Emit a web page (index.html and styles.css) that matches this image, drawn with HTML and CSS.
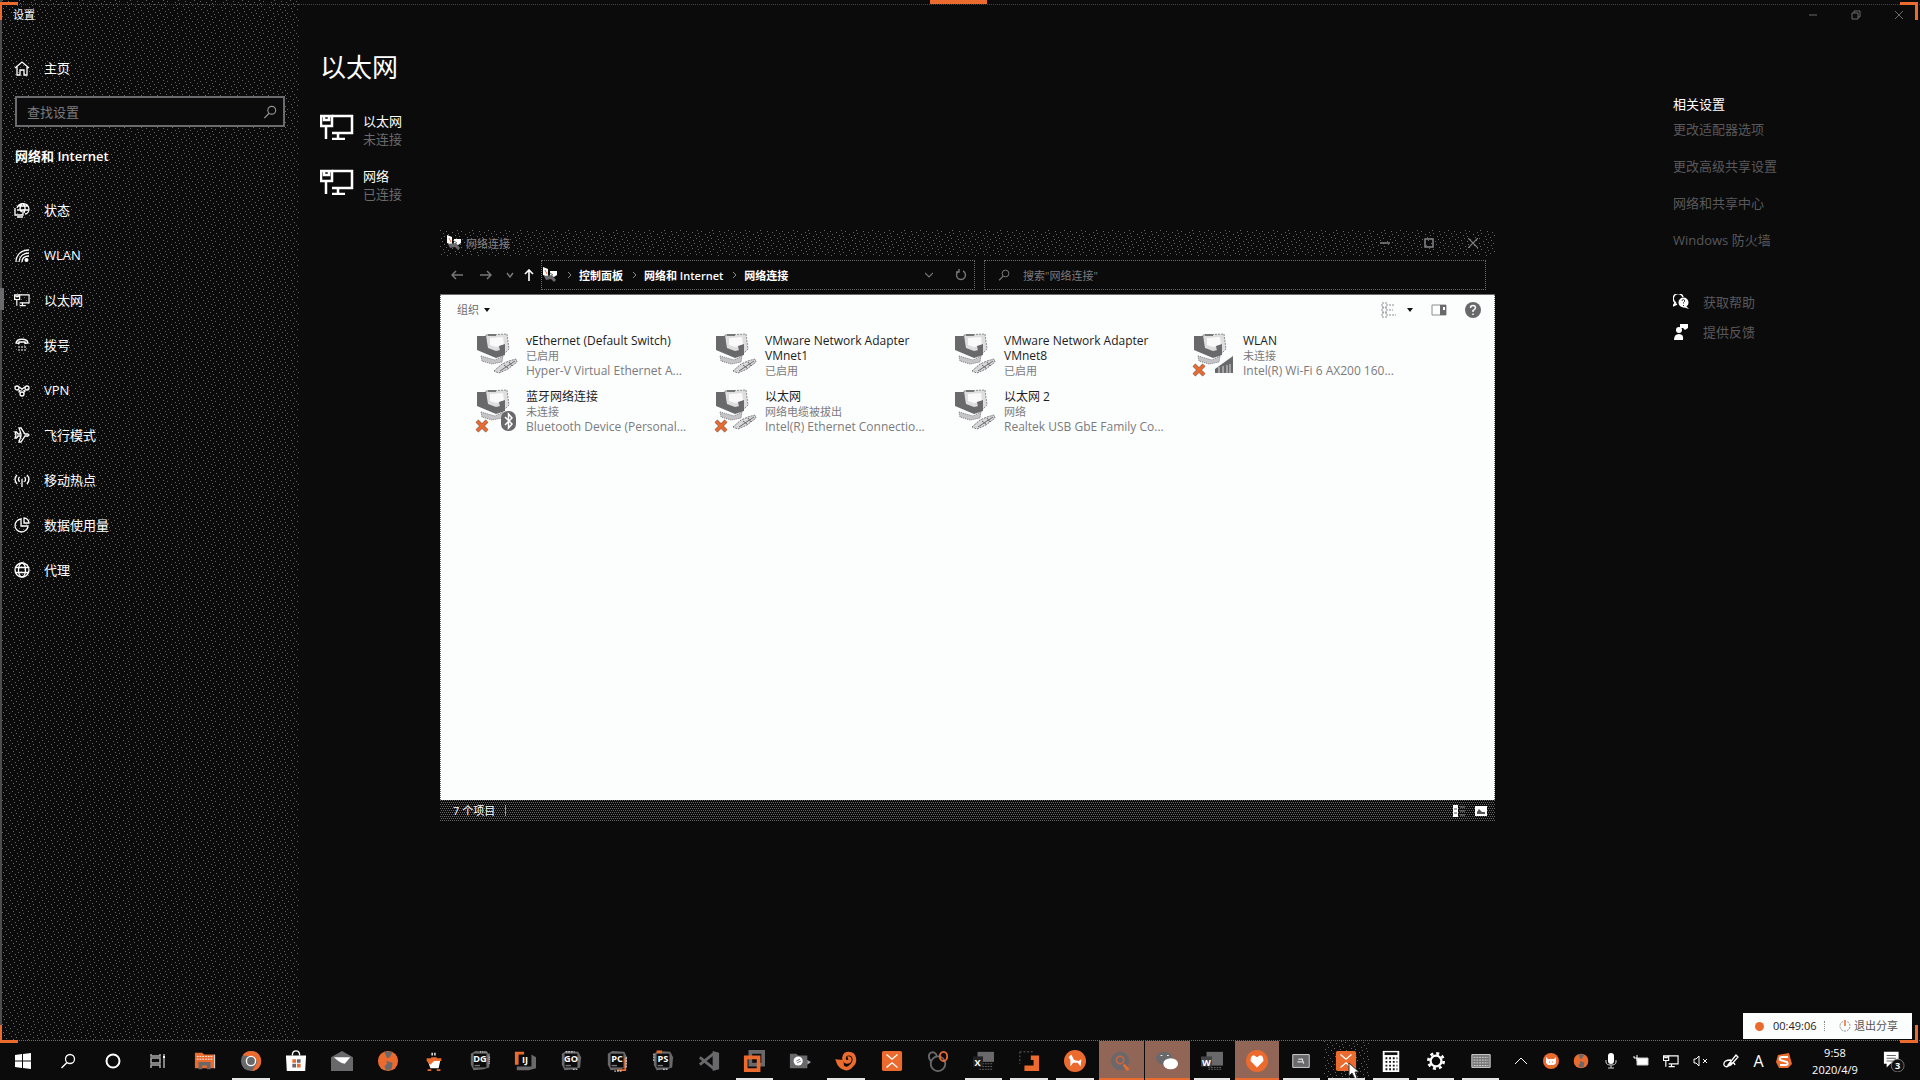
FILE: index.html
```html
<!DOCTYPE html>
<html lang="zh-CN">
<head>
<meta charset="utf-8">
<title>设置</title>
<link rel="stylesheet" href="styles.css">
</head>
<body>
<svg class="defs" aria-hidden="true">
  <defs>
    <symbol id="ethernet" viewBox="0 0 34 26"><path d="M12 2H32V19H12M18 19V25M12 25H25M6 13V25" fill="none" stroke="currentColor" stroke-width="2.500"/><path d="M1 2H12V12H1ZM4 2V6H9V2" fill="none" stroke="currentColor" stroke-width="2.500"/></symbol>
    <symbol id="magnifier" viewBox="0 0 16 16"><circle cx="10" cy="6" r="4.500" fill="none" stroke="currentColor" stroke-width="1.300"/><path d="M7 9.500L1.500 15" stroke="currentColor" stroke-width="1.500"/></symbol>
    <symbol id="globe" viewBox="0 0 16 16"><g fill="none" stroke="currentColor" stroke-width="1.300"><circle cx="8" cy="8" r="7"/><ellipse cx="8" cy="8" rx="3.500" ry="7"/><path d="M1.500 5.500H14.500M1.500 10.500H14.500"/></g></symbol>
    <symbol id="pcs" viewBox="0 0 42 42">
      <path d="M10 2L31 1L33 16L26 23L10 15Z" fill="#dededf" stroke="#8d8c8f" stroke-dasharray="2 1"/>
      <path d="M14 5L27 4L28 12L20 14L14 12Z" fill="#fafafa"/>
      <path d="M1 3L10 3L12 15L20 18L29 16V22L20 25L1 17Z" fill="#69686b"/>
      <path d="M23 13L29 11V17L24 18Z" fill="#69686b"/>
      <path d="M5 23L19 27L27 23L26 29L16 31L6 28Z" fill="#c5c4c6" stroke="#7d7c7f" stroke-dasharray="1 1"/>
      <path d="M12 2H20" stroke="#777" stroke-width="2"/>
    </symbol>
    <symbol id="plug" viewBox="0 0 42 42"><path d="M18 38L26 31L33 28L40 26L41 29L32 36L23 40Z" fill="#d7d6d8" stroke="#777679" stroke-dasharray="2 1"/><path d="M24 38L39 28M28 32L32 35M33 29L36 33" stroke="#69686b"/></symbol>
    <symbol id="cross" viewBox="0 0 14 14"><path d="M2 2L12 12M12 2L2 12" stroke="#77696a" stroke-width="4"/><path d="M2 2L12 12M12 2L2 12" stroke="#eb6b2f" stroke-width="3"/></symbol>
    <symbol id="netmini" viewBox="0 0 16 16"><path d="M1 0L6 2V10L1 8Z" fill="#fff"/><path d="M3 3L5 7" stroke="#eb6b2f"/><path d="M8 4H15V8L12 10L8 9Z" fill="#fff"/><path d="M8 6L11 8" stroke="#69686b"/><path d="M2 9L10 8L14 13L12 15L9 12L4 13Z" fill="#69686b"/></symbol>
    <symbol id="jet" viewBox="0 0 24 24"><path d="M2 4L7 1L20 2L23 8L22 19L16 21L5 22L2 16Z" fill="#69686b"/><path d="M5 4H19V19H5Z" fill="#0b0b0b"/><path d="M6 17H12" stroke="#777" stroke-width="1.500"/></symbol>
    <symbol id="xmark" viewBox="0 0 24 24"><rect x="1" y="1" width="22" height="22" rx="2" fill="#eb6b2f"/><path d="M6 5L12 10L18 5M6 19L12 14L18 19" fill="none" stroke="#fff" stroke-width="1.500"/></symbol>
    <symbol id="earth" viewBox="0 0 24 24"><circle cx="12" cy="12" r="11" fill="#eb6b2f"/><path d="M8 2L17 2L14 8L11 9ZM10 12L17 14L16 21L10 22L8 18L11 15Z" fill="#69686b"/></symbol>
  </defs>
</svg>

<main class="desktop">
  <aside class="sidebar">
    <div class="app-name">设置</div>
    <a class="nav-link home" href="#"><svg class="ico16" viewBox="0 0 16 16"><path d="M1 8L8 2L15 8M3 7V15H6V10H10V15H13V7" fill="none" stroke="currentColor" stroke-width="1.300"/></svg>主页</a>
    <label class="finder"><input type="text" placeholder="查找设置" aria-label="查找设置"><svg class="ico14"><use href="#magnifier"/></svg></label>
    <h2 class="section">网络和 Internet</h2>
    <nav>
      <a class="nav-link" href="#"><svg class="ico16" viewBox="0 0 16 16"><g fill="none" stroke="currentColor" stroke-width="1.300"><path d="M3 6C5 0 14 0 15 7C15 10 13 12 11 12M8 1.500C5 5 6 9 8 10M9 1.500C12 5 11 9 10 11M4 4H14M3 8H15"/><path d="M1 6V13H9V8M3 15H9"/></g></svg>状态</a>
      <a class="nav-link" href="#"><svg class="ico16" viewBox="0 0 16 16"><g fill="none" stroke="currentColor" stroke-width="1.300"><path d="M2 15C2 8 7 3 15 3M5 15C5 10 9 6 15 6M8 15C8 11 11 9 15 9"/></g><circle cx="12.500" cy="13" r="2" fill="currentColor"/></svg>WLAN</a>
      <a class="nav-link current" href="#"><svg class="ico16"><use href="#ethernet"/></svg>以太网</a>
      <a class="nav-link" href="#"><svg class="ico16" viewBox="0 0 16 16"><path d="M2 6C3 1 13 1 14 6L11 6.500V5H5V6.500Z" fill="none" stroke="currentColor" stroke-width="1.400"/><path d="M4 10H6M7 10H9M10 10H12M4 13H6M7 13H9M10 13H12" stroke="#807f82" stroke-width="2"/></svg>拨号</a>
      <a class="nav-link" href="#"><svg class="ico16" viewBox="0 0 16 16"><g fill="none" stroke="currentColor" stroke-width="1.300"><circle cx="3" cy="6" r="2"/><circle cx="13" cy="6" r="2"/><circle cx="8" cy="12" r="2"/><path d="M5 5L11 9L9 11M11 5L5 9L7 11"/></g></svg>VPN</a>
      <a class="nav-link" href="#"><svg class="ico16" viewBox="0 0 16 16"><path d="M1 5H2.500L4 7H7L5 1H7L11 7H14Q16 8 14 9H11L7 15H5L7 9H4L2.500 11H1L2 8Z" fill="none" stroke="currentColor" stroke-width="1.300"/></svg>飞行模式</a>
      <a class="nav-link" href="#"><svg class="ico16" viewBox="0 0 16 16"><path d="M3 3Q-1 7 3 12M13 3Q17 7 13 12M5.500 5Q3.500 7 5.500 10M10.500 5Q12.500 7 10.500 10M8 7V15" fill="none" stroke="currentColor" stroke-width="1.300"/></svg>移动热点</a>
      <a class="nav-link" href="#"><svg class="ico16" viewBox="0 0 16 16"><path d="M7 2A6.500 6.500 0 1 0 14 9H7Z M10 1V6H15A5 5 0 0 0 10 1Z" fill="none" stroke="currentColor" stroke-width="1.300"/></svg>数据使用量</a>
      <a class="nav-link" href="#"><svg class="ico16"><use href="#globe"/></svg>代理</a>
    </nav>
  </aside>

  <section class="content">
    <h1>以太网</h1>
    <a class="connection" href="#"><svg class="conn-ico"><use href="#ethernet"/></svg><span>以太网<small>未连接</small></span></a>
    <a class="connection" href="#"><svg class="conn-ico"><use href="#ethernet"/></svg><span>网络<small>已连接</small></span></a>
  </section>

  <aside class="related">
    <div class="caption">
      <button aria-label="最小化"><svg class="ico10" viewBox="0 0 10 10"><path d="M1 5H9" stroke="currentColor"/></svg></button>
      <button aria-label="还原"><svg class="ico10" viewBox="0 0 10 10"><path d="M1 3H7V9H1ZM3 3V1H9V7H7" fill="none" stroke="currentColor"/></svg></button>
      <button aria-label="关闭"><svg class="ico10" viewBox="0 0 10 10"><path d="M1 1L9 9M9 1L1 9" stroke="currentColor"/></svg></button>
    </div>
    <h2>相关设置</h2>
    <a class="rel-link" href="#">更改适配器选项</a>
    <a class="rel-link" href="#">更改高级共享设置</a>
    <a class="rel-link" href="#">网络和共享中心</a>
    <a class="rel-link" href="#">Windows 防火墙</a>
    <div class="support">
      <a href="#"><svg class="ico16" viewBox="0 0 16 16"><path d="M3 9A5 5 0 1 1 10 3M2 9L0 12L4 10" fill="none" stroke="#fff" stroke-width="1.500"/><circle cx="10.500" cy="8.500" r="5" fill="#fff"/><path d="M13 12L16 15L10 13Z" fill="#fff"/><path d="M9 7Q9 5.500 10.500 5.500Q12 5.500 11.500 7.500L10.500 8.500V9.500M10.500 11V12" fill="none" stroke="#333"/></svg>获取帮助</a>
      <a href="#"><svg class="ico16" viewBox="0 0 16 16"><circle cx="6" cy="6" r="3" fill="#fff"/><path d="M1 16Q1 10 6 10Q11 10 10 16ZM7 0H15V4L12 6L10 4H7Z" fill="#fff"/></svg>提供反馈</a>
    </div>
  </aside>

  <section class="window" aria-label="网络连接">
    <header class="titlebar">
      <svg class="ico16"><use href="#netmini"/></svg><span class="win-title">网络连接</span>
      <button aria-label="最小化"><svg class="ico10" viewBox="0 0 10 10"><path d="M0 5H10" stroke="currentColor" stroke-width="1.500"/></svg></button>
      <button aria-label="最大化"><svg class="ico10" viewBox="0 0 10 10"><path d="M1 1H9V9H1Z" fill="none" stroke="currentColor" stroke-width="1.500"/></svg></button>
      <button aria-label="关闭"><svg class="ico10" viewBox="0 0 10 10"><path d="M0 0L10 10M10 0L0 10" stroke="currentColor" stroke-width="1.200"/></svg></button>
    </header>
    <div class="addressbar">
      <div class="history">
        <button aria-label="后退"><svg class="ico12" viewBox="0 0 12 12"><path d="M12 6H1M5 2L1 6L5 10" fill="none" stroke="#777" stroke-width="1.500"/></svg></button>
        <button aria-label="前进"><svg class="ico12" viewBox="0 0 12 12"><path d="M0 6H11M7 2L11 6L7 10" fill="none" stroke="#777" stroke-width="1.500"/></svg></button>
        <button class="slim" aria-label="最近"><svg class="ico8" viewBox="0 0 8 8"><path d="M1 2L4 6L7 2" fill="none" stroke="#777" stroke-width="1.500"/></svg></button>
        <button class="slim" aria-label="向上"><svg class="ico12" viewBox="0 0 12 12"><path d="M6 12V1M2 5L6 1L10 5" fill="none" stroke="#fff" stroke-width="1.600"/></svg></button>
      </div>
      <div class="path">
        <svg class="ico16"><use href="#netmini"/></svg>
        <svg class="sep" viewBox="0 0 8 8"><path d="M3 1L6 4L3 7" fill="none" stroke="#888"/></svg><a href="#">控制面板</a>
        <svg class="sep" viewBox="0 0 8 8"><path d="M3 1L6 4L3 7" fill="none" stroke="#888"/></svg><a href="#">网络和 Internet</a>
        <svg class="sep" viewBox="0 0 8 8"><path d="M3 1L6 4L3 7" fill="none" stroke="#888"/></svg><a href="#">网络连接</a>
        <button class="path-end" aria-label="展开"><svg class="ico8" viewBox="0 0 8 8"><path d="M0 2L4 6L8 2" fill="none" stroke="#777" stroke-width="1.200"/></svg></button>
        <button aria-label="刷新"><svg class="ico12" viewBox="0 0 12 12"><path d="M4 2A4.500 4.500 0 1 0 8 2M4 0V3H1" fill="none" stroke="#777" stroke-width="1.400"/></svg></button>
      </div>
      <label class="lookup"><svg class="ico12"><use href="#magnifier"/></svg><input type="text" placeholder="搜索&quot;网络连接&quot;" aria-label="搜索网络连接"></label>
    </div>
    <div class="pane">
      <div class="toolbar">
        <button>组织<span class="caret"></span></button>
        <div class="tools">
          <button aria-label="更改视图"><svg class="ico16" viewBox="0 0 16 16"><path d="M1 1H6V5H1ZM1 6H6V10H1ZM1 11H6V15H1ZM8 3H14M8 8H12M8 13H15" fill="none" stroke="#8d8c8f" stroke-dasharray="2 1"/></svg><span class="caret"></span></button>
          <button aria-label="预览窗格"><svg class="ico16" viewBox="0 0 16 16"><path d="M1 3H15V13H1Z" fill="none" stroke="#8d8c8f"/><path d="M9 3H15V13H9Z" fill="#69686b"/><path d="M12 5H14V8H12Z" fill="#fff"/></svg></button>
          <button aria-label="帮助"><svg class="ico16" viewBox="0 0 16 16"><circle cx="8" cy="8" r="8" fill="#69686b"/><path d="M5.500 6Q5.500 3.500 8 3.500Q10.500 3.500 10.500 6Q10 7.500 8 8.500V10M8 11.500V13" fill="none" stroke="#fff" stroke-width="1.400"/></svg></button>
        </div>
      </div>
      <div class="adapters">
        <article class="adapter"><svg class="pc" viewBox="0 0 42 42"><use href="#pcs"/><use href="#plug"/></svg><div><h3>vEthernet (Default Switch)</h3><p>已启用</p><p class="device">Hyper-V Virtual Ethernet A...</p></div></article>
        <article class="adapter"><svg class="pc" viewBox="0 0 42 42"><use href="#pcs"/><use href="#plug"/></svg><div><h3>VMware Network Adapter VMnet1</h3><p>已启用</p></div></article>
        <article class="adapter"><svg class="pc" viewBox="0 0 42 42"><use href="#pcs"/><use href="#plug"/></svg><div><h3>VMware Network Adapter VMnet8</h3><p>已启用</p></div></article>
        <article class="adapter"><svg class="pc" viewBox="0 0 42 42"><use href="#pcs"/><path d="M22 40V36L40 23V40Z" fill="#69686b"/><path d="M26 34V40M30 33V40M34 32V40M37 31V40" stroke="#ddd"/><use href="#cross" x="-1" y="30" width="14" height="14"/></svg><div><h3>WLAN</h3><p>未连接</p><p class="device">Intel(R) Wi-Fi 6 AX200 160...</p></div></article>
        <article class="adapter"><svg class="pc" viewBox="0 0 42 42"><use href="#pcs"/><rect x="25" y="22" width="15" height="20" rx="7" fill="#69686b"/><path d="M29 28L36 35L32.500 39V25L36 29L29 36" fill="none" stroke="#fff" stroke-width="1.500"/><use href="#cross" x="-1" y="30" width="14" height="14"/></svg><div><h3>蓝牙网络连接</h3><p>未连接</p><p class="device">Bluetooth Device (Personal...</p></div></article>
        <article class="adapter"><svg class="pc" viewBox="0 0 42 42"><use href="#pcs"/><use href="#plug"/><use href="#cross" x="-1" y="30" width="14" height="14"/></svg><div><h3>以太网</h3><p>网络电缆被拔出</p><p class="device">Intel(R) Ethernet Connectio...</p></div></article>
        <article class="adapter"><svg class="pc" viewBox="0 0 42 42"><use href="#pcs"/><use href="#plug"/></svg><div><h3>以太网 2</h3><p>网络</p><p class="device">Realtek USB GbE Family Co...</p></div></article>
      </div>
    </div>
    <footer class="status">
      <span class="count">7 个项目</span>
      <button aria-label="详细信息"><svg class="ico12" viewBox="0 0 12 12"><path d="M0 0H5V12H0Z" fill="#fff"/><path d="M1 4H4M1 8H4" stroke="#555"/><path d="M7 2H12M7 6H12M7 10H12" stroke="#888"/></svg></button>
      <button aria-label="大图标"><svg class="ico12" viewBox="0 0 12 12"><path d="M0 1H12V11H0Z" fill="#fff"/><path d="M2 7L4 4L7 7H10V9H2" fill="#555"/></svg></button>
    </footer>
  </section>

  <div class="share">
    <span class="rec"></span><time>00:49:06</time>
    <button><svg class="ico12" viewBox="0 0 12 12"><path d="M4 1.500A5 5 0 1 0 8 1.500" fill="none" stroke="#8d8c8f" stroke-dasharray="2 1"/><path d="M6 0V6" stroke="#eb6b2f" stroke-width="1.500"/></svg>退出分享</button>
  </div>
  <span class="corner tl"></span><span class="corner tr"></span><span class="corner bl"></span><span class="corner br"></span>
  <span class="share-tab"></span>
</main>

<footer class="taskbar">
  <div class="system">
    <button aria-label="开始"><svg class="ico16" viewBox="0 0 16 16"><path d="M0 2L7 1V7.500H0ZM8 1L16 0V7.500H8ZM0 8.500H7V15L0 14ZM8 8.500H16V16L8 15Z" fill="#fff"/></svg></button>
    <button aria-label="搜索"><svg class="ico16"><use href="#magnifier"/></svg></button>
    <button aria-label="Cortana"><svg class="ico16" viewBox="0 0 16 16"><circle cx="8" cy="8" r="6.500" fill="none" stroke="#fff" stroke-width="2"/></svg></button>
    <button aria-label="任务视图"><svg class="ico16" viewBox="0 0 16 16"><path d="M1 1V3H10V1M1 15V12H10V15M1 5H10V10H1ZM14 1V15" fill="none" stroke="#aaa" stroke-width="1.500"/><path d="M13 4H15" stroke="#fff" stroke-width="2"/></svg></button>
  </div>
  <div class="apps">
    <button aria-label="文件资源管理器"><svg class="ico22" viewBox="0 0 24 24"><path d="M1 3H9L11 5H22V20H1Z" fill="#eb6b2f"/><path d="M3 7H21M3 10H21" stroke="#fff" stroke-dasharray="2 1"/><path d="M5 21V13H18V21H14V17H9V21Z" fill="#69686b"/><path d="M22.500 5V20" stroke="#fff"/></svg></button>
    <button class="open" aria-label="Chrome"><svg class="ico22" viewBox="0 0 24 24"><circle cx="12" cy="12" r="11" fill="#69686b"/><path d="M3 6A11 11 0 1 1 13 23L19 13L15 7Z" fill="#eb6b2f"/><circle cx="12" cy="12" r="5" fill="#69686b" stroke="#fff" stroke-width="1.500"/></svg></button>
    <button aria-label="商店"><svg class="ico22" viewBox="0 0 24 24"><path d="M8 6Q8 1 12 1Q16 1 16 6" fill="none" stroke="#fff" stroke-width="1.500"/><path d="M1 6H23L22 23H2Z" fill="#fff"/><path d="M8 10H12V14H8ZM13 15H17V19H13Z" fill="#eb6b2f"/><path d="M13 10H17V14H13ZM8 15H12V19H8Z" fill="#69686b"/></svg></button>
    <button aria-label="邮件"><svg class="ico22" viewBox="0 0 24 24"><path d="M0 8L12 1L24 8V23H0Z" fill="#69686b"/><path d="M3 8H21L15 15Q12 15 8 12Z" fill="#fff"/></svg></button>
    <button aria-label="地球"><svg class="ico22"><use href="#earth"/></svg></button>
    <button aria-label="Java"><svg class="ico22" viewBox="0 0 24 24"><path d="M10 3V6M13 3V6" stroke="#fff" stroke-width="1.500"/><path d="M5 11H19L17 20H8Z" fill="#fff"/><path d="M9 8H15V9H20V12H12L8 16L4 12V9H9Z" fill="#eb6b2f"/><path d="M5 22H9M15 22H19" stroke="#eb6b2f" stroke-width="2"/></svg></button>
    <button aria-label="DataGrip"><svg class="ico22" viewBox="0 0 24 24"><use href="#jet"/><path d="M12 2H20M22 4V16" stroke="#fff" stroke-dasharray="1 1"/><text x="12" y="13" class="badge-text">DG</text></svg></button>
    <button aria-label="IntelliJ"><svg class="ico22" viewBox="0 0 24 24"><path d="M1 2H11V5H5V16H1Z" fill="#eb6b2f"/><path d="M19 5L24 8V20L16 22H3V18H19Z" fill="#69686b"/><text x="12" y="14" class="badge-text">IJ</text></svg></button>
    <button aria-label="GoLand"><svg class="ico22" viewBox="0 0 24 24"><use href="#jet"/><path d="M6 2H16M14 21H19" stroke="#fff" stroke-dasharray="2 1"/><text x="12" y="13" class="badge-text">GO</text></svg></button>
    <button aria-label="PyCharm"><svg class="ico22" viewBox="0 0 24 24"><use href="#jet"/><path d="M21 9V22H12" fill="none" stroke="#eb6b2f" stroke-width="2"/><path d="M22 8V19M9 23H18" stroke="#fff" stroke-dasharray="2 1"/><text x="12" y="13" class="badge-text">PC</text></svg></button>
    <button aria-label="PhpStorm"><svg class="ico22" viewBox="0 0 24 24"><use href="#jet"/><path d="M5 2H11" stroke="#eb6b2f" stroke-width="3"/><path d="M2 4V12M12 21H18" stroke="#fff" stroke-dasharray="2 1"/><text x="12" y="13" class="badge-text">PS</text></svg></button>
    <button aria-label="VS Code"><svg class="ico22" viewBox="0 0 24 24"><path d="M2 8L17 20M2 16L17 4" stroke="#69686b" stroke-width="3"/><path d="M16 1L23 3V21L16 23Z" fill="#69686b"/></svg></button>
    <button class="open" aria-label="VMware"><svg class="ico22" viewBox="0 0 24 24"><path d="M8 2H22V16H8Z" fill="none" stroke="#69686b" stroke-width="4"/><path d="M3 8H17V22H3Z" fill="none" stroke="#eb6b2f" stroke-width="4"/></svg></button>
    <button aria-label="录像"><svg class="ico22" viewBox="0 0 24 24"><path d="M1 4H8L10 6H20V20H1Z" fill="#69686b"/><circle cx="10" cy="12" r="5" fill="#fff"/><path d="M8 12L12 10M9 14L13 12" stroke="#69686b"/><path d="M20 11L24 13L20 16Z" fill="#aaa"/></svg></button>
    <button class="open" aria-label="远程"><svg class="ico22" viewBox="0 0 24 24"><path d="M3 12C6 20 14 23 18 17C23 13 22 4 15 4C9 4 8 12 13 13C17 13 17 8 14 9" fill="none" stroke="#eb6b2f" stroke-width="4"/><path d="M0 10L9 11L10 18L4 17Z" fill="#eb6b2f"/></svg></button>
    <button aria-label="XMind"><svg class="ico22"><use href="#xmark"/></svg></button>
    <button aria-label="网盘"><svg class="ico22" viewBox="0 0 24 24"><g fill="none" stroke="#69686b" stroke-width="2"><circle cx="12" cy="15" r="8"/><path d="M4 12Q0 6 4 3Q9 1 11 7"/><ellipse cx="18" cy="7" rx="4" ry="5" stroke="#eb6b2f"/></g></svg></button>
    <button class="open" aria-label="Excel"><svg class="ico22" viewBox="0 0 24 24"><path d="M6 2H24V13H6Z" fill="#69686b"/><path d="M8 15H23M8 18H23M8 21H23" stroke="#69686b" stroke-dasharray="2 1"/><path d="M1 7H12V18H1Z" fill="#222"/><text x="6" y="17" class="badge-text">X</text></svg></button>
    <button class="open" aria-label="投影"><svg class="ico22" viewBox="0 0 24 24"><path d="M2 2H16M2 2V15" stroke="#69686b" stroke-dasharray="2 2"/><path d="M14 6H23V23H7V17H17V11H14Z" fill="#eb6b2f"/></svg></button>
    <button class="open" aria-label="木马"><svg class="ico22" viewBox="0 0 24 24"><circle cx="12" cy="12" r="12" fill="#eb6b2f"/><path d="M5 8L8 5L11 11L16 12L19 10L18 18L15 14L10 14L7 18V11Z" fill="#fff"/></svg></button>
    <button class="alert" aria-label="查找"><svg class="ico22" viewBox="0 0 24 24"><circle cx="11" cy="12" r="10" fill="#69686b"/><circle cx="11" cy="11" r="4" fill="none" stroke="#c46440" stroke-width="2"/><path d="M15 16L20 22" stroke="#eb6b2f" stroke-width="3"/></svg></button>
    <button class="alert" aria-label="微信"><svg class="ico22" viewBox="0 0 24 24"><ellipse cx="9" cy="9" rx="9" ry="7" fill="#69686b"/><ellipse cx="16" cy="15" rx="8" ry="6" fill="#fff"/><path d="M5 6H7M12 6H14" stroke="#fff"/></svg></button>
    <button class="open" aria-label="Word"><svg class="ico22" viewBox="0 0 24 24"><path d="M6 2H24V17H6Z" fill="#69686b"/><path d="M8 19H23M8 21H23" stroke="#69686b" stroke-dasharray="2 1"/><path d="M0 7H12V18H0Z" fill="#444"/><text x="6" y="17" class="badge-text">W</text></svg></button>
    <button class="alert" aria-label="健康"><svg class="ico22" viewBox="0 0 24 24"><circle cx="12" cy="12" r="12" fill="#eb6b2f"/><path d="M12 19L5 12Q5 5 9 6L12 8L15 6Q19 5 19 12Z" fill="#fff"/></svg></button>
    <button class="open" aria-label="终端"><svg class="ico22" viewBox="0 0 24 24"><path d="M3 5H21V19H3Z" fill="#69686b" stroke="#ddd"/><path d="M9 10H13M8 13H14M13 9L15 15" stroke="#fff"/></svg></button>
    <button class="open active" aria-label="XMind"><svg class="ico22"><use href="#xmark"/></svg><svg class="pointer" viewBox="0 0 12 18"><path d="M1 1V14L4 11L7 17L9 16L7 10H11Z" fill="#fff" stroke="#333"/></svg></button>
    <button class="open" aria-label="计算器"><svg class="ico22" viewBox="0 0 24 24"><path d="M3 1H21V24H3Z" fill="#fff"/><path d="M5 4H19" stroke="#111" stroke-width="3"/><path d="M6 9H19M6 13H19M6 17H19M6 21H19" stroke="#111" stroke-width="2" stroke-dasharray="2 2"/></svg></button>
    <button class="open" aria-label="设置"><svg class="ico18" viewBox="2 2 20 20"><circle cx="12" cy="12" r="6" fill="none" stroke="#fff" stroke-width="2.500"/><circle cx="12" cy="12" r="8.500" fill="none" stroke="#fff" stroke-width="3" stroke-dasharray="3.300 3.376"/></svg></button>
    <button class="open" aria-label="键盘"><svg class="ico22" viewBox="0 0 24 24"><path d="M2 5H22V19H2Z" fill="#777" stroke="#ddd"/><path d="M4 8H20M4 11H20M4 14H20M4 17H20" stroke="#ddd" stroke-dasharray="2 1"/></svg></button>
  </div>
  <div class="tray">
    <button aria-label="显示隐藏的图标"><svg class="ico12" viewBox="0 0 12 12"><path d="M0 9L6 3L12 9" fill="none" stroke="#fff"/></svg></button>
    <button aria-label="助手"><svg class="ico16" viewBox="0 0 16 16"><circle cx="8" cy="8" r="8" fill="#eb6b2f"/><path d="M3 4L5 6H11L13 4V10L11 12H5L3 10Z" fill="#fff"/><path d="M6 9H7M9 9H10" stroke="#eb6b2f"/></svg></button>
    <button aria-label="网络"><svg class="ico16"><use href="#earth"/></svg></button>
    <button aria-label="麦克风"><svg class="ico16" viewBox="0 0 16 16"><rect x="5" y="0" width="6" height="11" rx="3" fill="#fff"/><path d="M3 7V9Q3 12 8 12Q13 12 13 9V7M8 12V15M5 15H11" fill="none" stroke="#ccc"/></svg></button>
    <button aria-label="电池"><svg class="ico16" viewBox="0 0 16 16"><path d="M4 5H15V12H4Z" fill="#fff" stroke="#ccc"/><path d="M1 3V5M4 2V5M1 5H4V8" fill="none" stroke="#fff"/></svg></button>
    <button aria-label="以太网"><svg class="ico16"><use href="#ethernet"/></svg></button>
    <button aria-label="静音"><svg class="ico16" viewBox="0 0 16 16"><path d="M1 6H3L6 3V13L3 10H1ZM10 6L14 10M14 6L10 10" fill="none" stroke="#fff"/></svg></button>
    <button aria-label="墨迹"><svg class="ico16" viewBox="0 0 16 16"><path d="M5 12L13 2L15 4L8 12L5 13ZM8 7Q0 7 1 12Q3 16 7 11Q11 8 12 12" fill="none" stroke="#fff" stroke-width="1.300"/></svg></button>
    <button class="slim ime">A</button>
    <button class="slim" aria-label="搜狗"><svg class="ico16" viewBox="0 0 16 16"><path d="M2 2L13 0L16 11L12 15H3L0 9Z" fill="#eb6b2f"/><path d="M12 4H6Q3 4 4 7L11 9Q13 12 9 12H4" fill="none" stroke="#fff" stroke-width="2"/></svg></button>
    <time class="clock"><span>9:58</span><span>2020/4/9</span></time>
    <button class="notices" aria-label="通知"><svg class="ico22" viewBox="0 0 24 24"><path d="M1 2H17V15H8L4 19V15H1Z" fill="#fff"/><path d="M4 6H14M4 9H14M4 12H11" stroke="#555"/><circle cx="16" cy="17" r="7" fill="#111" stroke="#777"/><text x="16" y="21" class="badge-text">3</text></svg></button>
  </div>
</footer>
</body>
</html>
```
FILE: styles.css
```css
:root {
  --bg: #0b0b0b;
  --grey: #6b6a6d;
  --orange: #eb6b2f;
  --paper: #fcfefe;
  --speckle: url("data:image/svg+xml,%3Csvg xmlns='http://www.w3.org/2000/svg' width='48' height='16' shape-rendering='crispEdges'%3E%3Cpath stroke='%23666568' d='M0 .5h1M17 .5h1M32 .5h1M6 1.5h1M21 1.5h1M39 1.5h1M12 2.5h1M29 2.5h1M44 2.5h1M3 3.5h1M18 3.5h1M33 3.5h1M8 4.5h1M25 4.5h1M40 4.5h1M15 5.5h1M30 5.5h1M46 5.5h1M4 6.5h1M19 6.5h1M37 6.5h1M10 7.5h1M27 7.5h1M42 7.5h1M1 8.5h1M16 8.5h1M31 8.5h1M7 9.5h1M22 9.5h1M38 9.5h1M13 10.5h1M28 10.5h1M43 10.5h1M2 11.5h1M19 11.5h1M35 11.5h1M9 12.5h1M24 12.5h1M40 12.5h1M14 13.5h1M31 13.5h1M45 13.5h1M4 14.5h1M20 14.5h1M36 14.5h1M11 15.5h1M26 15.5h1M43 15.5h1'/%3E%3C/svg%3E");
  --mesh: url("data:image/svg+xml,%3Csvg xmlns='http://www.w3.org/2000/svg' width='4' height='4' shape-rendering='crispEdges'%3E%3Cpath stroke='%23666568' d='M0 .5h1M2 .5h1M1 2.5h1M3 2.5h1'/%3E%3C/svg%3E");
}
* { box-sizing: border-box; }
body {
  margin: 0;
  min-height: 100vh;
  display: flex;
  flex-direction: column;
  background: var(--bg);
  color: #fff;
  font: 13px/18px "Open Sans", "Noto Sans CJK SC", sans-serif;
}
h1, h2, h3, p { margin: 0; font-weight: 400; }
a { color: inherit; text-decoration: none; }
button {
  display: flex;
  align-items: center;
  justify-content: center;
  padding: 0;
  border: 0;
  background: none;
  color: inherit;
  font: inherit;
}
input {
  flex: 1;
  min-width: 0;
  padding: 0;
  border: 0;
  outline: 0;
  background: none;
  color: #fff;
  font: inherit;
}
input::placeholder { color: #7b7a7d; opacity: 1; }
svg { flex: none; display: block; }
.defs { position: absolute; width: 0; height: 0; }
.ico8 { width: 8px; height: 8px; }
.ico10 { width: 10px; height: 10px; }
.ico12 { width: 12px; height: 12px; }
.ico14 { width: 14px; height: 14px; }
.ico16 { width: 16px; height: 16px; }
.ico18 { width: 18px; height: 18px; }
.ico22 { width: 22px; height: 22px; }
.badge-text { fill: #fff; font: 700 10px "Open Sans", sans-serif; text-anchor: middle; }

.desktop { position: relative; flex: 1; display: flex; border-bottom: 1px dotted var(--grey); }
.desktop::before {
  content: "";
  position: absolute;
  top: 4px;
  left: 0;
  right: 0;
  border-top: 1px dotted #444;
}

.sidebar { width: 299px; background: var(--speckle); border-left: 2px solid #4c4b4e; }
.app-name { padding: 6px 12px 0 11px; font-size: 11px; }
.nav-link { position: relative; display: flex; align-items: center; gap: 14px; height: 45px; padding-left: 12px; }
.home { margin-top: 21px; }
.current::before { content: ""; position: absolute; left: -2px; top: 11px; width: 4px; height: 22px; background: var(--grey); }
.finder {
  display: flex;
  align-items: center;
  height: 31px;
  margin: 6px 14px 0 13px;
  padding: 0 6px 0 10px;
  border: 2px solid var(--grey);
  background: var(--bg);
  color: #929194;
}
.section { margin: 20px 0 22px 13px; font-size: 13px; font-weight: 600; }

.content { flex: 1; padding: 47px 21px 0; }
h1 { font-size: 26px; line-height: 40px; }
.connection { display: flex; gap: 9px; height: 55px; }
.connection:first-of-type { margin-top: 25px; }
.connection small { display: block; color: var(--grey); font-size: 13px; }
.conn-ico { width: 34px; height: 26px; margin-top: 2px; }

.related { width: 247px; }
.caption { display: flex; justify-content: flex-end; color: var(--grey); margin-bottom: 65px; }
.caption button { width: 43px; height: 30px; }
.related h2 { font-size: 13px; }
.rel-link { display: block; height: 37px; padding-top: 7px; color: #59585b; }
.support { margin-top: 26px; color: #59585b; }
.support a { display: flex; align-items: center; gap: 14px; height: 30px; }

.window {
  position: absolute;
  top: 230px;
  left: 440px;
  right: 425px;
  height: 591px;
  display: flex;
  flex-direction: column;
  background: var(--bg);
  font-size: 11px;
  line-height: 15px;
}
.titlebar { display: flex; align-items: center; height: 26px; padding-left: 6px; background: var(--speckle); color: #858487; }
.titlebar button { width: 44px; height: 22px; }
.win-title { flex: 1; padding-left: 4px; }
.addressbar { display: flex; height: 38px; padding: 4px 9px 4px 2px; }
.history { display: flex; width: 99px; }
.history button { width: 29px; }
.history .slim { width: 19px; }
.path { display: flex; flex: 434; align-items: center; border: 1px dotted var(--grey); gap: 6px; font-weight: 600; }
.sep { width: 8px; height: 8px; margin-left: 1px; }
.path-end { margin-left: auto; }
.path > button { width: 26px; height: 28px; }
.lookup { display: flex; flex: 502; align-items: center; gap: 13px; margin-left: 9px; padding-left: 13px; border: 1px dotted var(--grey); color: #7b7a7d; }
.path { flex: 0 0 434px; }
.pane { flex: 1; background: var(--paper); border: 1px dotted var(--grey); border-top: 1px solid var(--grey); border-bottom: 0; color: #1c1c1c; }
.toolbar { display: flex; justify-content: space-between; height: 29px; padding: 0 13px 0 16px; color: #6b6a6d; }
.tools { display: flex; gap: 18px; }
.caret { margin-left: 5px; border: 3px solid transparent; border-top: 4px solid #111; border-bottom: 0; }
.tools .caret { margin-left: 10px; }
.adapters { display: grid; grid-template-columns: repeat(4, 239px); grid-auto-rows: 56px; padding: 9px 0 0 35px; }
.adapter { display: flex; gap: 8px; }
.adapter > div { width: 170px; }
.adapter h3 { font-size: 12px; }
.adapter p { color: #7b7a7d; white-space: nowrap; }
.adapter .device { font-size: 12px; }
.pc { width: 42px; height: 42px; overflow: visible; }
.status { display: flex; align-items: center; gap: 10px; height: 21px; padding: 0 8px 0 13px; background: var(--mesh); }
.count { margin-right: auto; padding-right: 10px; border-right: 1px solid #999; line-height: 11px; }

.share {
  position: absolute;
  right: 8px;
  bottom: 1px;
  display: flex;
  align-items: center;
  width: 169px;
  height: 26px;
  padding: 0 14px 0 12px;
  background: var(--paper);
  color: #222;
  font-size: 11px;
}
.rec { width: 9px; height: 9px; border-radius: 5px; background: var(--orange); }
.share time { margin: 0 7px 0 9px; }
.share button { flex: 1; gap: 3px; justify-content: flex-end; border-left: 1px dotted #888; height: 10px; color: #555; }

.corner { position: absolute; width: 18px; height: 18px; border: 0 solid var(--orange); }
.tl { left: 0; top: 2px; border-width: 3px 0 0 2px; }
.tr { right: 2px; top: 2px; border-width: 3px 3px 0 0; }
.bl { left: 0; bottom: -3px; border-width: 0 0 3px 2px; }
.br { right: 2px; bottom: -3px; border-width: 0 3px 3px 0; }
.share-tab { position: absolute; top: 0; left: calc(50% - 30px); width: 57px; height: 4px; background: var(--orange); }

.taskbar { display: flex; height: 39px; background: var(--bg); }
.taskbar button { position: relative; height: 39px; }
.system, .tray { display: flex; }
.system button { width: 45px; }
.apps { display: flex; flex: 1; padding-left: 2px; }
.apps button { flex: 45; }
.apps button:nth-child(n+23) { flex: 44; }
.open::after, .alert::after { content: ""; position: absolute; bottom: 0; left: 4px; right: 4px; height: 2px; background: #e6e6e6; }
.alert { box-shadow: inset 1px 0 var(--bg); }
.apps .alert { background: #926657; }
.alert::after { left: 1px; right: 0; background: var(--orange); }
.apps .active { background: var(--speckle); }
.pointer { position: absolute; left: 24px; top: 21px; width: 12px; height: 18px; }
.tray { width: 417px; padding-left: 3px; }
.tray button { width: 30px; }
.tray .slim { width: 25px; }
.ime { font-size: 16px; }
.clock { width: 78px; display: flex; flex-direction: column; align-items: center; padding-top: 3px; font-size: 11px; line-height: 17px; }
.tray .notices { width: 40px; }
```
